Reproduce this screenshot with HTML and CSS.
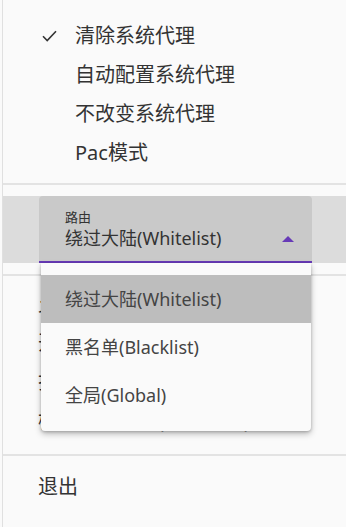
FILE: index.html
```html
<!DOCTYPE html>
<html lang="zh-CN">
<head>
  <meta charset="UTF-8">
  <meta name="viewport" content="width=device-width, initial-scale=1.0">
  <title>系统代理</title>
  <link rel="stylesheet" href="styles.css">
</head>
<body>
  <div class="panel">
    <div class="section first">
      <div class="item checked">
        <span class="check">
          <svg width="15" height="12" viewBox="0 0 15 12"><path d="M1 6.3 L5.2 10.5 L14 1.2" fill="none" stroke="#333" stroke-width="1.6"/></svg>
        </span>清除系统代理
      </div>
      <div class="item checked-col">自动配置系统代理</div>
      <div class="item checked-col">不改变系统代理</div>
      <div class="item checked-col">Pac模式</div>
    </div>
    <div class="divider"></div>

    <div class="section">
      <div class="select-row">
        <div class="select">
          <div class="select-label">路由</div>
          <div class="select-value">绕过大陆(Whitelist)</div>
          <span class="arrow"></span>
          <div class="menu">
            <div class="menu-item selected">绕过大陆(Whitelist)</div>
            <div class="menu-item">黑名单(Blacklist)</div>
            <div class="menu-item">全局(Global)</div>
          </div>
        </div>
      </div>
    </div>
    <div class="divider"></div>

    <div class="section hidden-items">
      <div class="item">允许局域网连接</div>
      <div class="item">开机自动启动</div>
      <div class="item">打开日志目录</div>
      <div class="item">检查更新设置(当前版本)</div>
    </div>
    <div class="divider"></div>

    <div class="section">
      <div class="item">退出</div>
    </div>
  </div>
</body>
</html>
```

FILE: styles.css
```css
/* Estilos gerais */
body {
  margin: 0;
  background-color: #fafafa;
  font-family: "Noto Sans", "Noto Sans CJK SC", sans-serif;
  color: #333333;
}
.panel {
  margin-left: 2px;
  border-left: 1px solid #e0e0e0;
  min-height: 527px;
  box-sizing: border-box;
}
.section {
  padding: 11px 0;
}
.section.first {
  padding-top: 16px;
}
.section.hidden-items {
  padding: 8px 0 14px;
}
.divider {
  height: 2px;
  background-color: #e3e3e3;
}
.item {
  height: 39px;
  line-height: 39px;
  font-size: 20px;
  padding-left: 35px;
  white-space: nowrap;
  display: flex;
  align-items: center;
}
.item.checked-col {
  padding-left: 72px;
}
.item.checked {
  padding-left: 39px;
}
.check {
  width: 33px;
  display: flex;
  align-items: center;
}
.select-row {
  background-color: #dcdcdc;
  padding-left: 36px;
}
.select {
  position: relative;
  width: 273px;
  box-sizing: border-box;
  background-color: #c9c9c9;
  border-radius: 4px 4px 0 0;
  border-bottom: 2px solid #673ab7;
  padding: 13px 0 11px 26px;
}
.select-label {
  font-size: 13px;
  line-height: 16px;
  color: #333333;
}
.select-value {
  font-size: 18px;
  line-height: 24px;
  color: #333333;
  margin-top: 1px;
}
.arrow {
  position: absolute;
  right: 18px;
  top: 40px;
  width: 0;
  height: 0;
  border-left: 6px solid transparent;
  border-right: 6px solid transparent;
  border-bottom: 6px solid #673ab7;
}
.menu {
  position: absolute;
  top: 100%;
  margin-top: 2px;
  left: 2px;
  width: 270px;
  padding: 12px 0;
  background-color: #fafafa;
  border-radius: 0 0 4px 4px;
  box-shadow: 0 3px 6px rgba(0, 0, 0, 0.25), 0 1px 3px rgba(0, 0, 0, 0.2);
  z-index: 2;
}
.menu-item {
  height: 48px;
  line-height: 48px;
  padding-left: 24px;
  font-size: 18px;
  color: #444444;
}
.menu-item.selected {
  background-color: #bdbdbd;
}
```
